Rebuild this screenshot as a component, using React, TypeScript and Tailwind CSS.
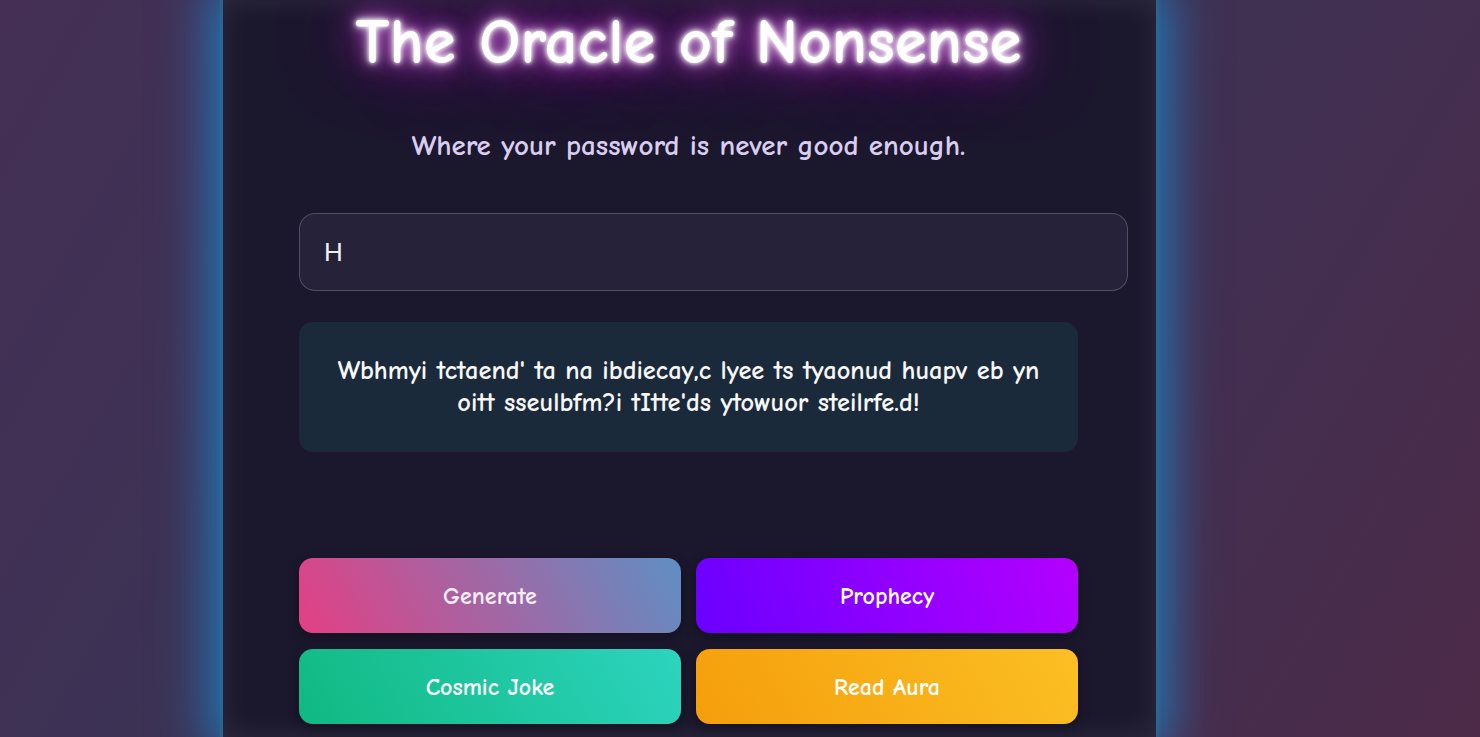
import React from "react";

const font = { fontFamily: '"Comic Sans MS", "Comic Neue", cursive' };

export default function App() {
  return (
    <div
      className="w-[1480px] h-[737px] overflow-hidden bg-[linear-gradient(120deg,#452f55_0%,#393455_40%,#413052_70%,#4c2a48_100%)]"
      style={font}
    >
      <div className="ml-[223px] w-[933px] h-[737px] bg-[#1b172d] shadow-[0_0_4px_2px_rgba(40,110,150,0.8),0_0_45px_14px_rgba(30,130,200,0.85),inset_0_0_28px_rgba(255,255,255,0.09)] px-[76px] pt-[2px]">
        <div className="w-[779px] flex flex-col">
          <h1 className="text-center text-[65px] leading-[80px] font-bold text-white whitespace-nowrap [text-shadow:0_0_4px_#fff,0_0_10px_#fff,0_0_20px_#e879f9,0_0_40px_#c026d3,0_0_80px_#a21caf]">
            The Oracle of Nonsense
          </h1>
          <p className="mt-[48px] text-center text-[29px] leading-[32px] font-bold text-[#d9cdf0] whitespace-nowrap">
            Where your password is never good enough.
          </p>
          <input
            readOnly
            value="H"
            className="mt-[51px] box-content w-full h-[76px] px-[24px] rounded-[16px] border border-white/20 bg-[#25223a] text-[26px] text-[#f0eff5] outline-none"
            style={{ fontFamily: '"Liberation Sans", Arial, sans-serif' }}
          />
          <div className="mt-[31px] h-[130px] rounded-[14px] bg-[#1b2a3a] flex items-center justify-center px-[30px]">
            <p className="text-center text-[26.4px] leading-[32px] font-bold text-[#f7f7f8]">
              Wbhmyi tctaend' ta na ibdiecay,c lyee ts tyaonud huapv eb yn oitt sseulbfm?i tItte'ds ytowuor steilrfe.d!
            </p>
          </div>
          <div className="mt-[106px] grid grid-cols-2 gap-x-[15px] gap-y-[16px]">
            <button className="h-[75px] rounded-[14px] bg-[linear-gradient(60deg,#e43f84,#5f8fc4)] text-[24px] font-bold text-[#f6eef6] shadow-[0_4px_12px_rgba(0,0,0,0.3)]">
              Generate
            </button>
            <button className="h-[75px] rounded-[14px] bg-[linear-gradient(70deg,#6a00ff,#b400ff)] text-[24px] font-bold text-white shadow-[0_4px_12px_rgba(0,0,0,0.3)]">
              Prophecy
            </button>
            <button className="h-[75px] rounded-[14px] bg-[linear-gradient(60deg,#10b981,#2dd4bf)] text-[24px] font-bold text-white shadow-[0_4px_12px_rgba(0,0,0,0.3)]">
              Cosmic Joke
            </button>
            <button className="h-[75px] rounded-[14px] bg-[linear-gradient(60deg,#f59e0b,#fbbf24)] text-[24px] font-bold text-white shadow-[0_4px_12px_rgba(0,0,0,0.3)]">
              Read Aura
            </button>
          </div>
        </div>
      </div>
    </div>
  );
}
